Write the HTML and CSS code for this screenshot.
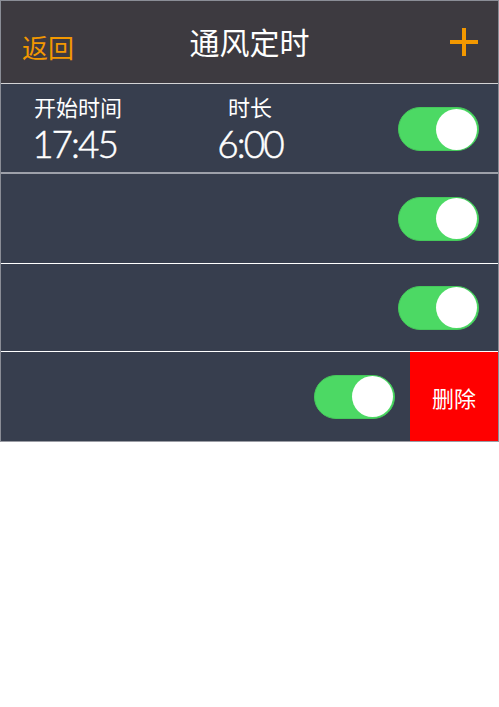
FILE: index.html
```html
<!DOCTYPE html>
<html lang="zh">
<head>
<meta charset="utf-8">
<title>通风定时</title>
<link rel="stylesheet" href="styles.css">
</head>
<body>
<div class="screen">
  <header class="topbar">
    <span class="back">返回</span>
    <h1 class="title">通风定时</h1>
    <span class="add" aria-label="添加">
      <svg width="28" height="28" viewBox="0 0 28 28"><rect x="12" y="0" width="4" height="28" fill="#f39800"/><rect x="0" y="12" width="28" height="4" fill="#f39800"/></svg>
    </span>
  </header>
  <div class="row row-first">
    <div class="col col-start">
      <div class="label">开始时间</div>
      <div class="value">17:45</div>
    </div>
    <div class="col col-dur">
      <div class="label">时长</div>
      <div class="value">6:00</div>
    </div>
    <div class="switch"><span class="knob"></span></div>
  </div>
  <div class="row row-mid">
    <div class="switch"><span class="knob"></span></div>
  </div>
  <div class="row row-mid row-short">
    <div class="switch"><span class="knob"></span></div>
  </div>
  <div class="row row-swiped">
    <div class="switch"><span class="knob"></span></div>
    <div class="delete">删除</div>
  </div>
</div>
</body>
</html>
```
FILE: styles.css
```css
html, body {
  margin: 0;
  padding: 0;
  background: #ffffff;
}
body {
  font-family: "Noto Sans CJK SC", "Noto Sans", sans-serif;
  color: #ffffff;
}
.screen {
  width: 497px;
  border: 1px solid #8a8d96;
  border-bottom-color: #9a9ca4;
  background: #373e4e;
}
.topbar {
  height: 82px;
  background: #3d3a40;
  border-bottom: 1px solid #d4d4d6;
  display: grid;
  grid-template-columns: 1fr auto 1fr;
  align-items: center;
}
.back {
  justify-self: start;
  margin-left: 21px;
  margin-top: 9px;
  color: #f39800;
  font-size: 26px;
  line-height: 1;
}
.title {
  margin: 0;
  font-size: 30px;
  font-weight: 400;
  line-height: 1;
  margin-top: -2px;
}
.add {
  justify-self: end;
  margin-right: 20px;
  display: flex;
}
.row {
  height: 88px;
  display: flex;
  align-items: center;
  justify-content: flex-end;
  padding-right: 19px;
}
.row-first {
  border-bottom: 2px solid #9ea1aa;
  justify-content: flex-start;
}
.row-mid {
  height: 89px;
  border-bottom: 1px solid #ffffff;
}
.row-short {
  height: 87px;
}
.row-swiped {
  height: 89px;
  padding-right: 0;
  gap: 15px;
}
.col {
  text-align: center;
  align-self: flex-start;
  padding-top: 9px;
}
.col-start {
  width: 154px;
}
.col-start .value {
  margin-right: 7px;
}
.col-dur {
  width: 190px;
}
.label {
  font-size: 22px;
  line-height: 27px;
}
.value {
  font-family: "Lato", "Noto Sans", sans-serif;
  font-weight: 300;
  font-size: 37px;
  line-height: 44px;
  margin-top: 2px;
  letter-spacing: -2px;
  -webkit-text-stroke: 0.5px #ffffff;
}
.switch {
  margin-left: auto;
  width: 78px;
  height: 42px;
  border-radius: 22px;
  background: #4cd964;
  border: 1px solid #45c95b;
  display: flex;
  align-items: center;
  justify-content: flex-end;
  padding-right: 1px;
  flex-shrink: 0;
}
.row-first .switch {
  margin-top: 2px;
}
.knob {
  width: 41px;
  height: 41px;
  border-radius: 50%;
  background: #ffffff;
}
.delete {
  width: 88px;
  height: 100%;
  background: #ff0000;
  display: flex;
  align-items: center;
  justify-content: center;
  font-size: 22px;
  flex-shrink: 0;
}
```
